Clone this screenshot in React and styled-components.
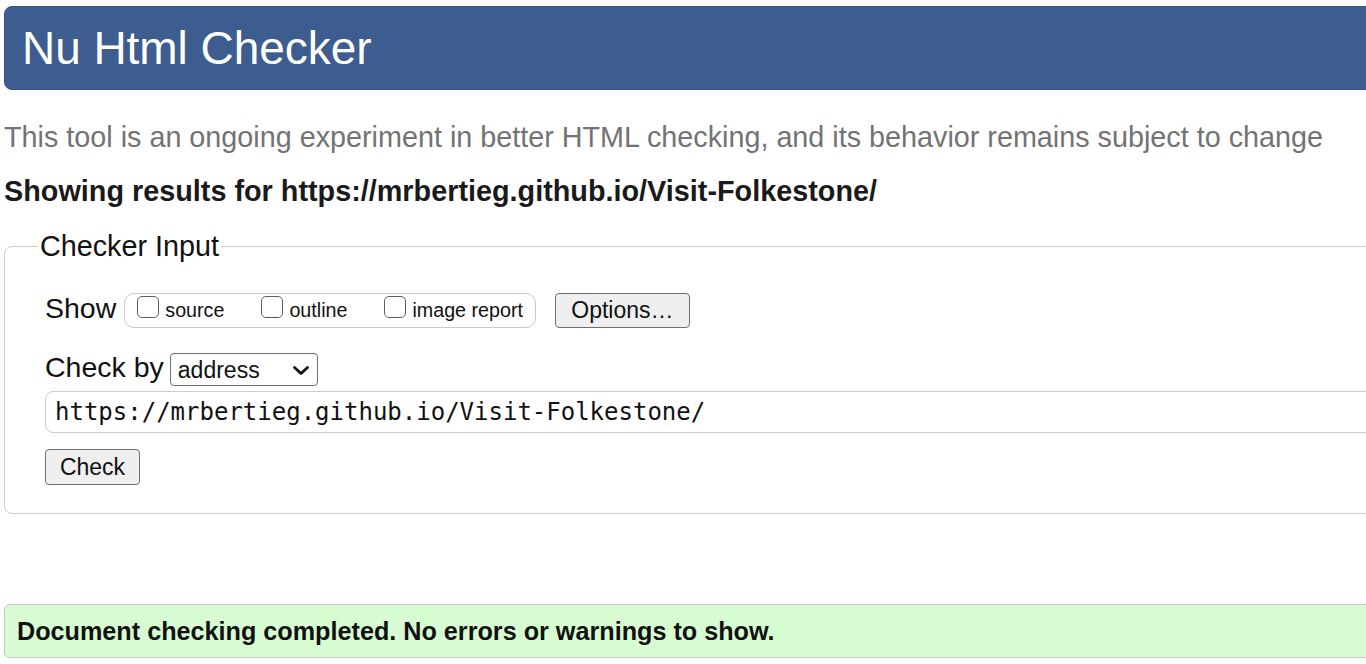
import React from "react";
import styled, { createGlobalStyle } from "styled-components";

const Global = createGlobalStyle`
  html, body { margin: 0; padding: 0; background: #fff; overflow: hidden; }
  body { font-family: "Liberation Sans", Arial, Helvetica, sans-serif; color: #111; }
`;

const Page = styled.div`
  width: 1420px;
  padding: 6px 0 0 4px;
  box-sizing: border-box;
`;

const Header = styled.header`
  height: 84px;
  background: #3d5c8f;
  border: 1px solid #34528a;
  box-sizing: border-box;
  border-radius: 8px;
  display: flex;
  align-items: center;
  padding-left: 17px;
`;

const Title = styled.h1`
  margin: 0;
  font-size: 46px;
  font-weight: 400;
  color: #fff;
  line-height: 1;
  letter-spacing: -0.05px;
`;

const Intro = styled.p`
  margin: 30px 0 0;
  font-size: 28.75px;
  line-height: 34px;
  color: #737373;
`;

const Showing = styled.p`
  margin: 20px 0 0;
  font-size: 28.8px;
  line-height: 34px;
  font-weight: 700;
  color: #1a1a1a;
`;

const Fieldset = styled.fieldset`
  margin: 22px 0 0;
  padding: 30px 0 28px 40px;
  border: 1px solid #cbcbcb;
  border-radius: 8px;
  min-width: 0;
  display: flex;
  flex-direction: column;
  align-items: flex-start;
`;

const Legend = styled.legend`
  margin-left: -7px;
  padding: 0 2px;
  font-size: 28.75px;
  line-height: 33px;
  color: #111;
`;

const Row = styled.div`
  display: flex;
  align-items: center;
  height: ${(p) => p.$h}px;
  margin-bottom: ${(p) => p.$mb || 0}px;
`;

const RowLabel = styled.span`
  font-size: 28.5px;
  line-height: 1;
  padding-bottom: ${(p) => p.$lift || 0}px;
  margin-right: ${(p) => p.$gap}px;
  color: #111;
`;

const CheckGroup = styled.div`
  display: flex;
  align-items: center;
  height: 35px;
  box-sizing: border-box;
  border: 1px solid #c9c9c9;
  border-radius: 10px;
  padding: 0 12px;
  gap: 37px;
`;

const CheckItem = styled.label`
  display: flex;
  align-items: center;
  gap: 6px;
  font-size: 19.7px;
  line-height: 1;
  color: #111;
`;

const Box = styled.input`
  appearance: none;
  -webkit-appearance: none;
  margin: 0 0 7px;
  width: 22px;
  height: 22px;
  box-sizing: border-box;
  border: 1.3px solid #5e5e5e;
  border-radius: 5px;
  background: #fff;
`;

const Button = styled.button`
  width: ${(p) => p.$w}px;
  height: ${(p) => p.$h}px;
  margin-left: ${(p) => p.$ml || 0}px;
  padding: 0;
  box-sizing: border-box;
  background: #efefef;
  border: 1px solid #6f6f6f;
  border-radius: 4px;
  font-family: "Liberation Sans", Arial, sans-serif;
  font-size: 23px;
  color: #111;
`;

const SelectWrap = styled.div`
  position: relative;
  width: 148px;
  height: 33px;
`;

const Select = styled.select`
  appearance: none;
  -webkit-appearance: none;
  width: 100%;
  height: 100%;
  box-sizing: border-box;
  border: 1px solid #6f6f6f;
  border-radius: 4px;
  background: #fff;
  padding: 0 0 0 7px;
  font-family: "Liberation Sans", Arial, sans-serif;
  font-size: 23px;
  color: #111;
`;

const Chevron = styled.svg`
  position: absolute;
  right: 9px;
  top: 13px;
  pointer-events: none;
`;

const UrlInput = styled.input`
  width: 100%;
  height: 42px;
  box-sizing: border-box;
  margin: 0 0 16px;
  border: 1px solid #cdcdcd;
  border-radius: 8px;
  padding: 0 0 0 9px;
  font-family: "DejaVu Sans Mono", Menlo, monospace;
  font-size: 24px;
  color: #111;
  background: #fff;
`;

const Success = styled.div`
  margin-top: 90px;
  height: 54px;
  box-sizing: border-box;
  background: #d8fcd2;
  border: 1px solid #c4c4c4;
  border-radius: 6px;
  display: flex;
  align-items: center;
  padding-left: 12px;
  font-size: 25.2px;
  font-weight: 700;
  color: #111;
`;

export default function App() {
  return (
    <>
      <Global />
      <Page>
        <Header>
          <Title>Nu Html Checker</Title>
        </Header>
        <Intro>
          This tool is an ongoing experiment in better HTML checking, and its behavior remains subject to change
        </Intro>
        <Showing>Showing results for https://mrbertieg.github.io/Visit-Folkestone/</Showing>
        <Fieldset>
          <Legend>Checker Input</Legend>
          <Row $h={35} $mb={25}>
            <RowLabel $lift={5} $gap={8}>Show</RowLabel>
            <CheckGroup>
              <CheckItem>
                <Box type="checkbox" />
                source
              </CheckItem>
              <CheckItem>
                <Box type="checkbox" />
                outline
              </CheckItem>
              <CheckItem>
                <Box type="checkbox" />
                image report
              </CheckItem>
            </CheckGroup>
            <Button type="button" $w={135} $h={35} $ml={19}>
              Options…
            </Button>
          </Row>
          <Row $h={33} $mb={5}>
            <RowLabel $lift={5} $gap={6}>Check by</RowLabel>
            <SelectWrap>
              <Select defaultValue="address">
                <option value="address">address</option>
                <option value="file">file upload</option>
                <option value="text">text input</option>
              </Select>
              <Chevron width="16" height="9" viewBox="0 0 16 9">
                <path d="M1.5 1.5 L8 7.5 L14.5 1.5" fill="none" stroke="#111" strokeWidth="2.8" strokeLinecap="round" strokeLinejoin="round" />
              </Chevron>
            </SelectWrap>
          </Row>
          <UrlInput type="url" defaultValue="https://mrbertieg.github.io/Visit-Folkestone/" />
          <Button type="button" $w={95} $h={36}>
            Check
          </Button>
        </Fieldset>
        <Success>Document checking completed. No errors or warnings to show.</Success>
      </Page>
    </>
  );
}
